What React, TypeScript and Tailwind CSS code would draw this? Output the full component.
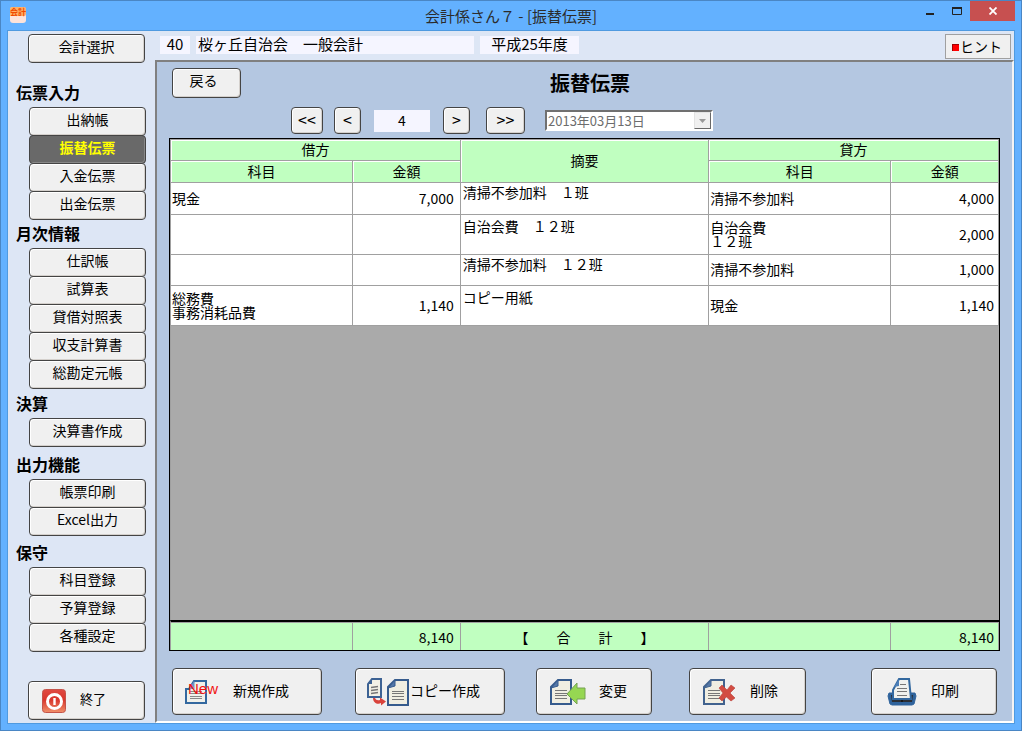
import React from "react";

type Group = { title: string; items: string[] };

const groups: Group[] = [
  { title: "伝票入力", items: ["出納帳", "振替伝票", "入金伝票", "出金伝票"] },
  { title: "月次情報", items: ["仕訳帳", "試算表", "貸借対照表", "収支計算書", "総勘定元帳"] },
  { title: "決算", items: ["決算書作成"] },
  { title: "出力機能", items: ["帳票印刷", "Excel出力"] },
  { title: "保守", items: ["科目登録", "予算登録", "各種設定"] },
];

const groupSpacing = ["mt-4", "", "mt-px", "mt-1", "mt-[3px]"];

type Row = {
  height: string;
  memoPadding: string;
  debit: string[];
  debitAmount: string;
  memo: string;
  credit: string[];
  creditAmount: string;
};

const rows: Row[] = [
  { height: "h-8", memoPadding: "pt-0", debit: ["現金"], debitAmount: "7,000", memo: "清掃不参加料　１班", credit: ["清掃不参加料"], creditAmount: "4,000" },
  { height: "h-10", memoPadding: "pt-0.5", debit: [], debitAmount: "", memo: "自治会費　１２班", credit: ["自治会費", "１２班"], creditAmount: "2,000" },
  { height: "h-[31px]", memoPadding: "pt-0", debit: [], debitAmount: "", memo: "清掃不参加料　１２班", credit: ["清掃不参加料"], creditAmount: "1,000" },
  { height: "h-10", memoPadding: "pt-0.5", debit: ["総務費", "事務消耗品費"], debitAmount: "1,140", memo: "コピー用紙", credit: ["現金"], creditAmount: "1,140" },
];

const buttonBase =
  "rounded-[4px] border border-[#444] bg-[#f0f0f0] text-black shadow-[inset_-1px_-1px_0_#d4d0cc,inset_1px_1px_0_#fff]";

function Columns() {
  return (
    <colgroup>
      <col className="w-[22%]" />
      <col className="w-[13%]" />
      <col className="w-[30%]" />
      <col className="w-[22%]" />
      <col className="w-[13%]" />
    </colgroup>
  );
}

function Page({ x, y, w, h, fold, color }: { x: number; y: number; w: number; h: number; fold: number; color: string }) {
  const lines = [0.42, 0.53, 0.64, 0.75];
  return (
    <g>
      <path
        d={`M${x + fold} ${y}H${x + w}V${y + h}H${x}V${y + fold}Z`}
        fill="#f0eee2"
        stroke={color}
        strokeWidth="2"
      />
      <path d={`M${x + fold} ${y}V${y + fold - 1}L${x} ${y + fold + 1}Z`} fill="#5578a8" stroke={color} strokeWidth="1" />
      {lines.map((t) => (
        <path key={t} d={`M${x + 4} ${Math.round(y + h * t) + 0.5}H${x + w - 4}`} stroke="#777" strokeWidth="1" />
      ))}
    </g>
  );
}

function NewIcon() {
  return (
    <svg width="34" height="28" viewBox="0 0 34 28" aria-hidden="true">
      <path d="M9 3H21V25H1V11H4Z" fill="#f0f0ea" stroke="#33689f" strokeWidth="2" />
      <path d="M9 3L4 11H9.500V4Z" fill="#6d95c4" />
      <path d="M5 13.500H17M5 15.500H17M5 18.500H17M5 20.500H17" stroke="#888" strokeWidth="1" />
      <text x="3" y="16" fill="#f01010" fontSize="15" fontFamily="Liberation Sans, sans-serif">
        New
      </text>
    </svg>
  );
}

function CopyIcon() {
  return (
    <svg width="44" height="30" viewBox="0 0 44 30" aria-hidden="true">
      <path d="M6 2H15V20H2V7Z" fill="#f3f1e6" stroke="#3d6294" strokeWidth="2" />
      <path d="M6 2V7H2Z" fill="#3d6294" />
      <path d="M5 10.500L12 9.500M5 13.500L12 12.500M5 16.500L12 15.500" stroke="#777" strokeWidth="1.6" />
      <path d="M7 21C7 26 12 28 15 26V28.500L20 24.500L14 20.500V23C11 23.500 10 23 9 21Z" fill="#d9433c" />
      <Page x={22} y={3} w={20} h={25} fold={7} color="#365b8d" />
    </svg>
  );
}

function EditIcon() {
  return (
    <svg width="38" height="30" viewBox="0 0 38 30" aria-hidden="true">
      <Page x={2} y={3} w={20} h={24} fold={7} color="#365b8d" />
      <path d="M18 17L28 6V11H36V22H28V27Z" fill="#96d752" stroke="#76a252" strokeWidth="1" />
    </svg>
  );
}

function DeleteIcon() {
  return (
    <svg width="34" height="30" viewBox="0 0 34 30" aria-hidden="true">
      <Page x={2} y={3} w={20} h={24} fold={7} color="#41628e" />
      <path
        d="M17 11L20 8L25 13L29 8L33 11L28 16L33 21L29 24L24.500 20L20 24L17 21L21 16Z"
        fill="#d24c42"
        stroke="#b93e38"
        strokeWidth="0.6"
      />
    </svg>
  );
}

function PrintIcon() {
  return (
    <svg width="30" height="30" viewBox="0 0 30 30" aria-hidden="true">
      <path d="M2 16H6V20H24V16H28L29 19L27 27L25 28H5L3 27L1 19Z" fill="#2f639c" stroke="#2f639c" strokeWidth="1" />
      <path d="M4 18H26L25 25H5Z" fill="#2b2f36" />
      <path d="M12 2H22L24 22H6V13Z" fill="#f0f1ee" stroke="#33689f" strokeWidth="2" />
      <path d="M12 2L12 9L7 10Z" fill="#4c7fb8" />
      <path d="M13 7.500H19M10 11.500H20M10 14.500H20M10 18.500H20" stroke="#777" strokeWidth="1" />
      <circle cx="15" cy="24" r="1" fill="#111" />
    </svg>
  );
}

function PowerIcon() {
  return (
    <svg width="24" height="24" viewBox="0 0 24 24" aria-hidden="true">
      <defs>
        <linearGradient id="power" x1="0" y1="0" x2="0" y2="1">
          <stop offset="0" stopColor="#e04a42" />
          <stop offset="0.45" stopColor="#d9362c" />
          <stop offset="1" stopColor="#f0906a" />
        </linearGradient>
      </defs>
      <rect x="0.5" y="0.5" width="23" height="23" rx="3" fill="url(#power)" stroke="#c4544a" />
      <circle cx="12.500" cy="12.500" r="7" fill="none" stroke="#fff" strokeWidth="3" />
      <path d="M12.500 9V16" stroke="#fff" strokeWidth="2.400" />
    </svg>
  );
}

function AppIcon() {
  return (
    <svg width="16" height="16" viewBox="0 0 16 16" aria-hidden="true">
      <rect width="16" height="16" rx="3" fill="#fde3da" />
      <rect y="0" width="16" height="9" rx="2" fill="#ffb066" />
      <text x="0" y="8" fill="#f04a00" fontSize="8" fontWeight="bold" fontFamily="Noto Sans CJK JP, sans-serif">
        会計
      </text>
    </svg>
  );
}

function TitleBar() {
  return (
    <header className="grid h-[29px] shrink-0 grid-cols-[1fr_auto_1fr]">
      <div className="pt-1.5 pl-[9px]">
        <AppIcon />
      </div>
      <h1 className="pt-[3px] text-[15px] leading-6 text-[#2b2b2b]">会計係さん７ - [振替伝票]</h1>
      <div className="flex items-start justify-end pr-1.5">
        <button type="button" aria-label="最小化" className="flex h-5 w-7 items-center justify-center">
          <svg width="8" height="10" viewBox="0 0 8 10"><path d="M0 8H8" stroke="#222" strokeWidth="2" /></svg>
        </button>
        <button type="button" aria-label="最大化" className="flex h-5 w-[26px] items-center justify-center">
          <svg width="10" height="8" viewBox="0 0 10 8"><path d="M0.500 1V7.500H9.500V1" fill="none" stroke="#222" /><path d="M0 1H10" stroke="#222" strokeWidth="2" /></svg>
        </button>
        <button type="button" aria-label="閉じる" className="flex h-5 w-[45px] items-center justify-center bg-[#c75050]">
          <svg width="8" height="8" viewBox="0 0 8 8"><path d="M0.500 0.500L7.500 7.500M7.500 0.500L0.500 7.500" stroke="#fff" strokeWidth="1.800" /></svg>
        </button>
      </div>
    </header>
  );
}

function Sidebar() {
  return (
    <nav aria-label="メニュー" className="flex w-[147px] shrink-0 flex-col pt-[3px] pb-[3px] text-sm">
      <button type="button" className={`${buttonBase} ml-5 h-[29px] w-[117px] pb-1.5 leading-5`}>
        会計選択
      </button>
      {groups.map((group, g) => (
        <section key={group.title} className={groupSpacing[g]}>
          <h2 className="pb-0.5 pl-2 text-base leading-[26px] font-bold">{group.title}</h2>
          <div className="ml-[21px] flex flex-col">
            {group.items.map((item, i) => (
              <button
                key={item}
                type="button"
                className={`h-[29px] w-[117px] pb-1.5 leading-5 ${i > 0 ? "-mt-px" : ""} ${
                  item === "振替伝票"
                    ? "rounded-[4px] border border-[#444] bg-[#696969] font-bold text-[#ffff00] shadow-[inset_-1px_-1px_0_#888]"
                    : buttonBase
                }`}
              >
                {item}
              </button>
            ))}
          </div>
        </section>
      ))}
      <button type="button" className={`${buttonBase} mt-auto ml-5 flex h-[39px] w-[117px] items-center gap-3.5 pl-[13px]`}>
        <PowerIcon />
        <span className="pb-1 text-[13px] leading-5">終了</span>
      </button>
    </nav>
  );
}

const cell = "border-r border-b border-[#a0a0a0]";
const headCell = `${cell} bg-[#c0ffc0] p-0 pb-0.5 text-center font-normal shadow-[inset_1px_1px_0_#fff]`;
const amountCell = `${cell} bg-white p-0 pb-0.5 text-right leading-[18px]`;

function Account({ lines }: { lines: string[] }) {
  return (
    <td className={`${cell} bg-white p-0 pb-0.5 pl-px align-middle leading-[14px]`}>
      {lines.map((line) => (
        <div key={line}>{line}</div>
      ))}
    </td>
  );
}

function Slip() {
  return (
    <div className="mr-3 ml-3 flex flex-1 flex-col border border-black bg-[#aaaaaa] text-sm">
      <div className="flex-1 border-t border-l border-[#a0a0a0]">
        <table className="w-full table-fixed border-separate border-spacing-0">
          <Columns />
          <thead className="leading-[18px]">
            <tr className="h-[21px]">
              <th colSpan={2} className={headCell}>借方</th>
              <th rowSpan={2} className={headCell}>摘要</th>
              <th colSpan={2} className={headCell}>貸方</th>
            </tr>
            <tr className="h-[22px]">
              <th className={headCell}>科目</th>
              <th className={headCell}>金額</th>
              <th className={headCell}>科目</th>
              <th className={headCell}>金額</th>
            </tr>
          </thead>
          <tbody>
            {rows.map((row, i) => (
              <tr key={i} className={row.height}>
                <Account lines={row.debit} />
                <td className={`${amountCell} pr-1.5`}>{row.debitAmount}</td>
                <td className={`${cell} bg-white px-0.5 pb-0 align-top leading-[18px] ${row.memoPadding}`}>{row.memo}</td>
                <Account lines={row.credit} />
                <td className={`${amountCell} pr-1`}>{row.creditAmount}</td>
              </tr>
            ))}
          </tbody>
        </table>
      </div>
      <div className="border-t-2 border-l border-t-black border-l-[#a0a0a0]">
        <table aria-label="合計" className="w-full table-fixed border-separate border-spacing-0">
          <Columns />
          <tbody>
            <tr className="h-7 bg-[#c0ffc0] leading-5 [&>td]:border-t [&>td]:border-r [&>td]:border-[#a0a0a0] [&>td]:p-0">
              <td></td>
              <td className="text-right"><span className="pr-1.5">8,140</span></td>
              <td className="text-center whitespace-pre">【　　合　　計　　】</td>
              <td></td>
              <td className="text-right"><span className="pr-1">8,140</span></td>
            </tr>
          </tbody>
        </table>
      </div>
    </div>
  );
}

function Action({ className, icon, label }: { className: string; icon: React.ReactNode; label: string }) {
  return (
    <button type="button" className={`${buttonBase} flex h-[47px] shrink-0 items-center text-sm leading-5 ${className}`}>
      {icon}
      <span className="pb-1">{label}</span>
    </button>
  );
}

export default function App() {
  const field = "h-[18px] bg-[#f5f5ff] text-[15px] leading-4";
  const nav = `${buttonBase} h-[27px] pb-1 text-base leading-5`;
  return (
    <div className="flex min-h-screen flex-col border border-[#4a86c4] bg-[#63b1ff] font-['Noto_Sans_CJK_JP',sans-serif] text-black">
      <TitleBar />
      <div className="mx-1.5 mb-1.5 flex flex-1 border border-[#4f9ae0] bg-[#dde6f5]">
        <Sidebar />
        <div className="flex min-w-0 flex-1 flex-col">
          <div className="flex h-[29px] shrink-0 items-start pt-[5px] pr-[3px] pl-[5px]">
            <div className={`${field} w-[30px] text-center`}>40</div>
            <div className={`${field} ml-1.5 w-[278px] pl-0.5`}>桜ヶ丘自治会　一般会計</div>
            <div className={`${field} ml-1.5 w-[99px] text-center`}>平成25年度</div>
            <button
              type="button"
              className="-mt-0.5 ml-auto flex h-[25px] w-[66px] items-center border border-[#a0a0a0] bg-[#f0f0f0] pl-1.5 text-sm leading-5"
            >
              <span className="mt-0.5 size-[7px] border-t border-l border-[#a00000] bg-[#ff0000]" />
              <span className="pb-0.5 pl-px">ヒント</span>
            </button>
          </div>
          <main className="flex flex-1 flex-col border-2 border-t-[#808080] border-r-[#f4f4f4] border-b-white border-l-[#808080] bg-[#b4c7e1]">
            <div className="grid grid-cols-[69px_1fr_61px] items-center pt-1.5 pr-3 pl-[15px]">
              <button type="button" className={`${buttonBase} h-[30px] pr-1.5 pb-1.5 text-sm leading-5`}>戻る</button>
              <h2 className="text-center text-xl leading-7 font-bold">振替伝票</h2>
            </div>
            <div className="flex items-center pt-[9px] pb-1 pl-[134px]">
              <button type="button" aria-label="最初の伝票" className={`${nav} w-8`}>&lt;&lt;</button>
              <button type="button" aria-label="前の伝票" className={`${nav} ml-[11px] w-[27px]`}>&lt;</button>
              <input
                aria-label="伝票番号"
                defaultValue="4"
                className="mx-[13px] h-[22px] w-14 bg-[#f5f5ff] pb-0.5 text-center text-sm leading-5 outline-none"
              />
              <button type="button" aria-label="次の伝票" className={`${nav} w-[27px]`}>&gt;</button>
              <button type="button" aria-label="最後の伝票" className={`${nav} ml-4 w-[39px]`}>&gt;&gt;</button>
              <div className="ml-5 grid h-[21px] w-[168px] border-2 border-t-[#707070] border-r-white border-b-white border-l-[#707070] bg-white">
                <select
                  aria-label="伝票日付"
                  disabled
                  className="col-start-1 row-start-1 h-[17px] appearance-none bg-white pl-px text-[13px] leading-[17px] text-[#6d6d6d] opacity-100"
                >
                  <option>2013年03月13日</option>
                </select>
                <span className="pointer-events-none col-start-1 row-start-1 flex h-[17px] w-[17px] items-center justify-center justify-self-end border border-t-[#e3e3e3] border-r-[#696969] border-b-[#696969] border-l-[#e3e3e3] bg-[#f0f0f0]">
                  <svg width="7" height="4" viewBox="0 0 7 4" aria-hidden="true"><path d="M0 0H7L3.500 4Z" fill="#999" /></svg>
                </span>
              </div>
            </div>
            <Slip />
            <div className="flex pt-[17px] pr-[15px] pb-1.5 pl-[15px]">
              <Action className="w-[150px] gap-3.5 pl-3" icon={<NewIcon />} label="新規作成" />
              <Action className="ml-[33px] w-[150px] pl-2.5" icon={<CopyIcon />} label="コピー作成" />
              <Action className="ml-[31px] w-[116px] gap-3 pl-3" icon={<EditIcon />} label="変更" />
              <Action className="ml-[37px] w-[117px] gap-3.5 pl-3" icon={<DeleteIcon />} label="削除" />
              <Action className="ml-auto w-[126px] gap-3.5 pl-[15px]" icon={<PrintIcon />} label="印刷" />
            </div>
          </main>
        </div>
      </div>
    </div>
  );
}
